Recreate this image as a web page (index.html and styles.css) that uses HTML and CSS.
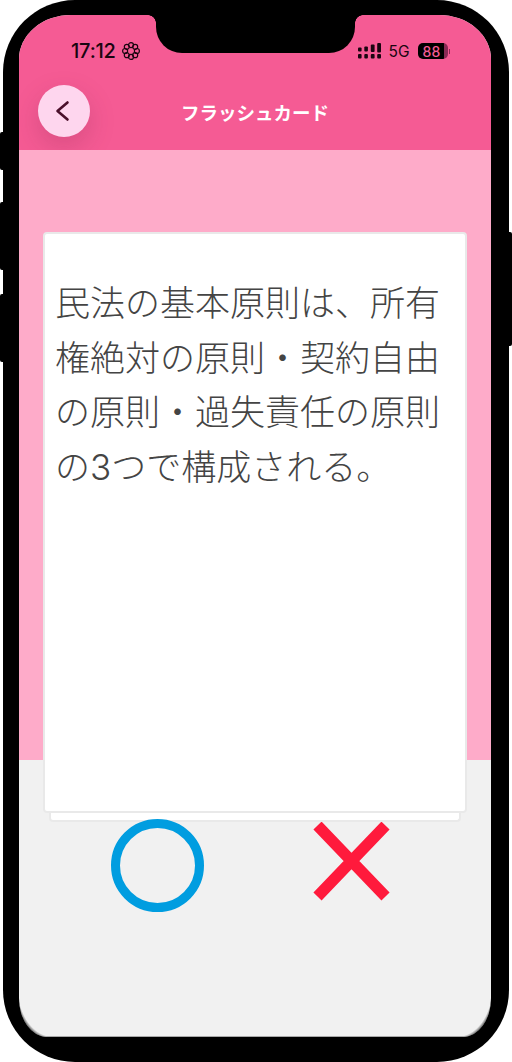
FILE: index.html
```html
<!DOCTYPE html>
<html lang="ja">
<head>
<meta charset="utf-8">
<title>フラッシュカード</title>
<link rel="stylesheet" href="styles.css">
</head>
<body>
<div class="phone">
  <span class="hw hw-mute"></span>
  <span class="hw hw-up"></span>
  <span class="hw hw-down"></span>
  <span class="hw hw-power"></span>
  <div class="screen">
    <div class="notch"></div>
    <header class="top">
      <div class="status">
        <div class="status-left">
          <span class="time">17:12</span>
          <svg class="flower" viewBox="0 0 18 18" width="18" height="18" fill="none" stroke="#1a0510" stroke-width="1.200">
            <circle cx="9" cy="3.100" r="2.500"/><circle cx="13.200" cy="4.800" r="2.500"/><circle cx="14.900" cy="9" r="2.500"/><circle cx="13.200" cy="13.200" r="2.500"/><circle cx="9" cy="14.900" r="2.500"/><circle cx="4.800" cy="13.200" r="2.500"/><circle cx="3.100" cy="9" r="2.500"/><circle cx="4.800" cy="4.800" r="2.500"/>
          </svg>
        </div>
        <div class="status-right">
          <svg class="signal" viewBox="0 0 23 16" width="23" height="16" fill="#1a0510">
            <rect x="0" y="4.500" width="3.600" height="4" rx="1"/><rect x="0" y="11" width="3.600" height="4.500" rx="1"/>
            <rect x="6.300" y="3.500" width="3.600" height="5" rx="1"/><rect x="6.300" y="11" width="3.600" height="4.500" rx="1"/>
            <rect x="12.800" y="1.500" width="3.800" height="7.500" rx="1"/><rect x="12.800" y="11" width="3.800" height="4.500" rx="1"/>
            <rect x="19.200" y="0" width="3.800" height="9.500" rx="1"/><rect x="19.200" y="11" width="3.800" height="4.500" rx="1"/>
          </svg>
          <span class="net">5G</span>
          <span class="battery"><span class="battery-num">88</span></span>
          <span class="battery-tip"></span>
        </div>
      </div>
      <div class="nav">
        <button class="back" type="button" aria-label="戻る">
          <svg viewBox="0 0 20 24" width="20" height="24" fill="none" stroke="#4a0f2a" stroke-width="2.600" stroke-linecap="round" stroke-linejoin="round"><path d="M13.500 3.500 3.500 12l10 8.500"/></svg>
        </button>
        <h1 class="title">フラッシュカード</h1>
      </div>
    </header>
    <main class="body">
      <div class="band"></div>
      <div class="stack">
        <div class="card">
          <p class="text">民法の基本原則は、所有権絶対の原則・契約自由の原則・過失責任の原則の3つで構成される。</p>
        </div>
        <div class="card-under"></div>
      </div>
      <div class="answers">
        <span class="circle"></span>
        <svg class="cross" viewBox="0 0 78 80" width="78" height="80">
          <path d="M5.500 3.500 73.500 74.500M73.500 3.500 5.500 74.500" stroke="#ff1a3c" stroke-width="11.300" fill="none"/>
        </svg>
      </div>
    </main>
  </div>
</div>
</body>
</html>
```
FILE: styles.css
```css
* { box-sizing: border-box; }
html, body { margin: 0; padding: 0; background: #fff; }
body { width: 512px; height: 1062px; overflow: hidden; font-family: "Noto Sans CJK JP", "Noto Sans", sans-serif; }
.phone { position: relative; width: 506px; height: 1062px; margin-left: 3px; background: #000; border-radius: 72px; padding: 15px 16px 25px; }
.hw { position: absolute; background: #000; width: 4px; }
.hw-mute { left: -3px; top: 132px; height: 38px; border-radius: 2px 0 0 2px; }
.hw-up { left: -3px; top: 202px; height: 68px; border-radius: 2px 0 0 2px; }
.hw-down { left: -3px; top: 294px; height: 68px; border-radius: 2px 0 0 2px; }
.hw-power { right: -3px; top: 232px; height: 114px; border-radius: 0 2px 2px 0; }
.screen { position: relative; width: 472px; height: 1022px; background: #f1f1f1; border-radius: 52px 52px 28px 28px / 44px 44px 39px 39px; overflow: hidden; display: flex; flex-direction: column; }
.screen::after { content: ""; position: absolute; left: 0; right: 0; bottom: 0; height: 39px; box-shadow: inset 0 -1px 0 #a8a8a8; background:
  radial-gradient(ellipse 36px 50px at 34px -10px, transparent 97%, rgba(0, 0, 0, .6) 104%) left top / 28px 39px no-repeat,
  radial-gradient(ellipse 36px 50px at -6px -10px, transparent 97%, rgba(0, 0, 0, .6) 104%) right top / 28px 39px no-repeat; pointer-events: none; }
.notch { position: absolute; left: 137px; top: -2px; width: 199px; height: 40px; background: #000; border-radius: 0 0 26px 26px; z-index: 2; }
.notch::before, .notch::after { content: ""; position: absolute; top: 2px; width: 8px; height: 8px; }
.notch::before { left: -8px; background: radial-gradient(circle at 0 100%, transparent 7.500px, #000 8px); }
.notch::after { right: -8px; background: radial-gradient(circle at 100% 100%, transparent 7.500px, #000 8px); }
.top { height: 135px; background: #f55b94; flex: none; display: flex; flex-direction: column; }
.status { height: 59px; padding: 25px 0 0 52px; display: flex; justify-content: space-between; align-items: flex-start; }
.status-left { display: flex; align-items: center; gap: 6px; height: 22px; }
.time { font-family: Inter, "Liberation Sans", sans-serif; font-size: 20px; font-weight: 500; letter-spacing: -.2px; color: #1a0510; }
.flower { display: block; }
.status-right { display: flex; align-items: center; height: 22px; margin-right: 41px; }
.signal { display: block; margin-right: 8px; }
.net { font-family: Inter, "Liberation Sans", sans-serif; font-size: 15.500px; color: #1a0510; margin-right: 8px; }
.battery { display: flex; width: 30px; height: 16px; border-radius: 5px; background: linear-gradient(90deg, #000 0 85%, #8a2a55 85%); align-items: center; padding-left: 5px; }
.battery-num { font-family: Inter, "Liberation Sans", sans-serif; font-size: 14px; font-weight: 500; color: #f55b94; letter-spacing: .3px; }
.battery-tip { width: 1.500px; height: 5px; background: #8a2a55; margin-left: 1px; }
.nav { display: flex; align-items: flex-start; height: 76px; padding-left: 19px; position: relative; }
.back { width: 52px; height: 52px; margin-top: 11px; border: 0; border-radius: 50%; background: #fed6ee; padding: 0; display: flex; align-items: center; justify-content: center; box-shadow: 0 10px 26px rgba(120, 30, 70, .22); flex: none; }
.title { position: absolute; left: 0; right: 0; top: 25px; margin: 0; text-align: center; font-size: 18.500px; line-height: 26px; font-weight: 700; color: #fff; }
.body { position: relative; flex: 1; display: flex; flex-direction: column; }
.band { height: 610px; background: #feabc9; flex: none; }
.stack { position: absolute; left: 24px; right: 24px; top: 82px; }
.card { height: 581px; background: #fff; border: 2px solid #e9e9e9; border-radius: 4px; padding: 42px 22px 0 10px; position: relative; z-index: 1; }
.text { margin: 0; font-size: 35px; line-height: 54.500px; color: #444; font-weight: 300; font-family: Inter, "Noto Sans CJK JP", sans-serif; }
.card-under { height: 9px; margin: 0 6px; background: #fff; border: 2px solid #e9e9e9; border-top: 0; border-radius: 0 0 4px 4px; }
.answers { position: absolute; top: 669px; left: 92px; display: flex; align-items: flex-start; gap: 108px; }
.circle { display: block; width: 93px; height: 93px; border: 9px solid #009de0; border-radius: 50%; }
.cross { display: block; margin-top: 3px; }
```
